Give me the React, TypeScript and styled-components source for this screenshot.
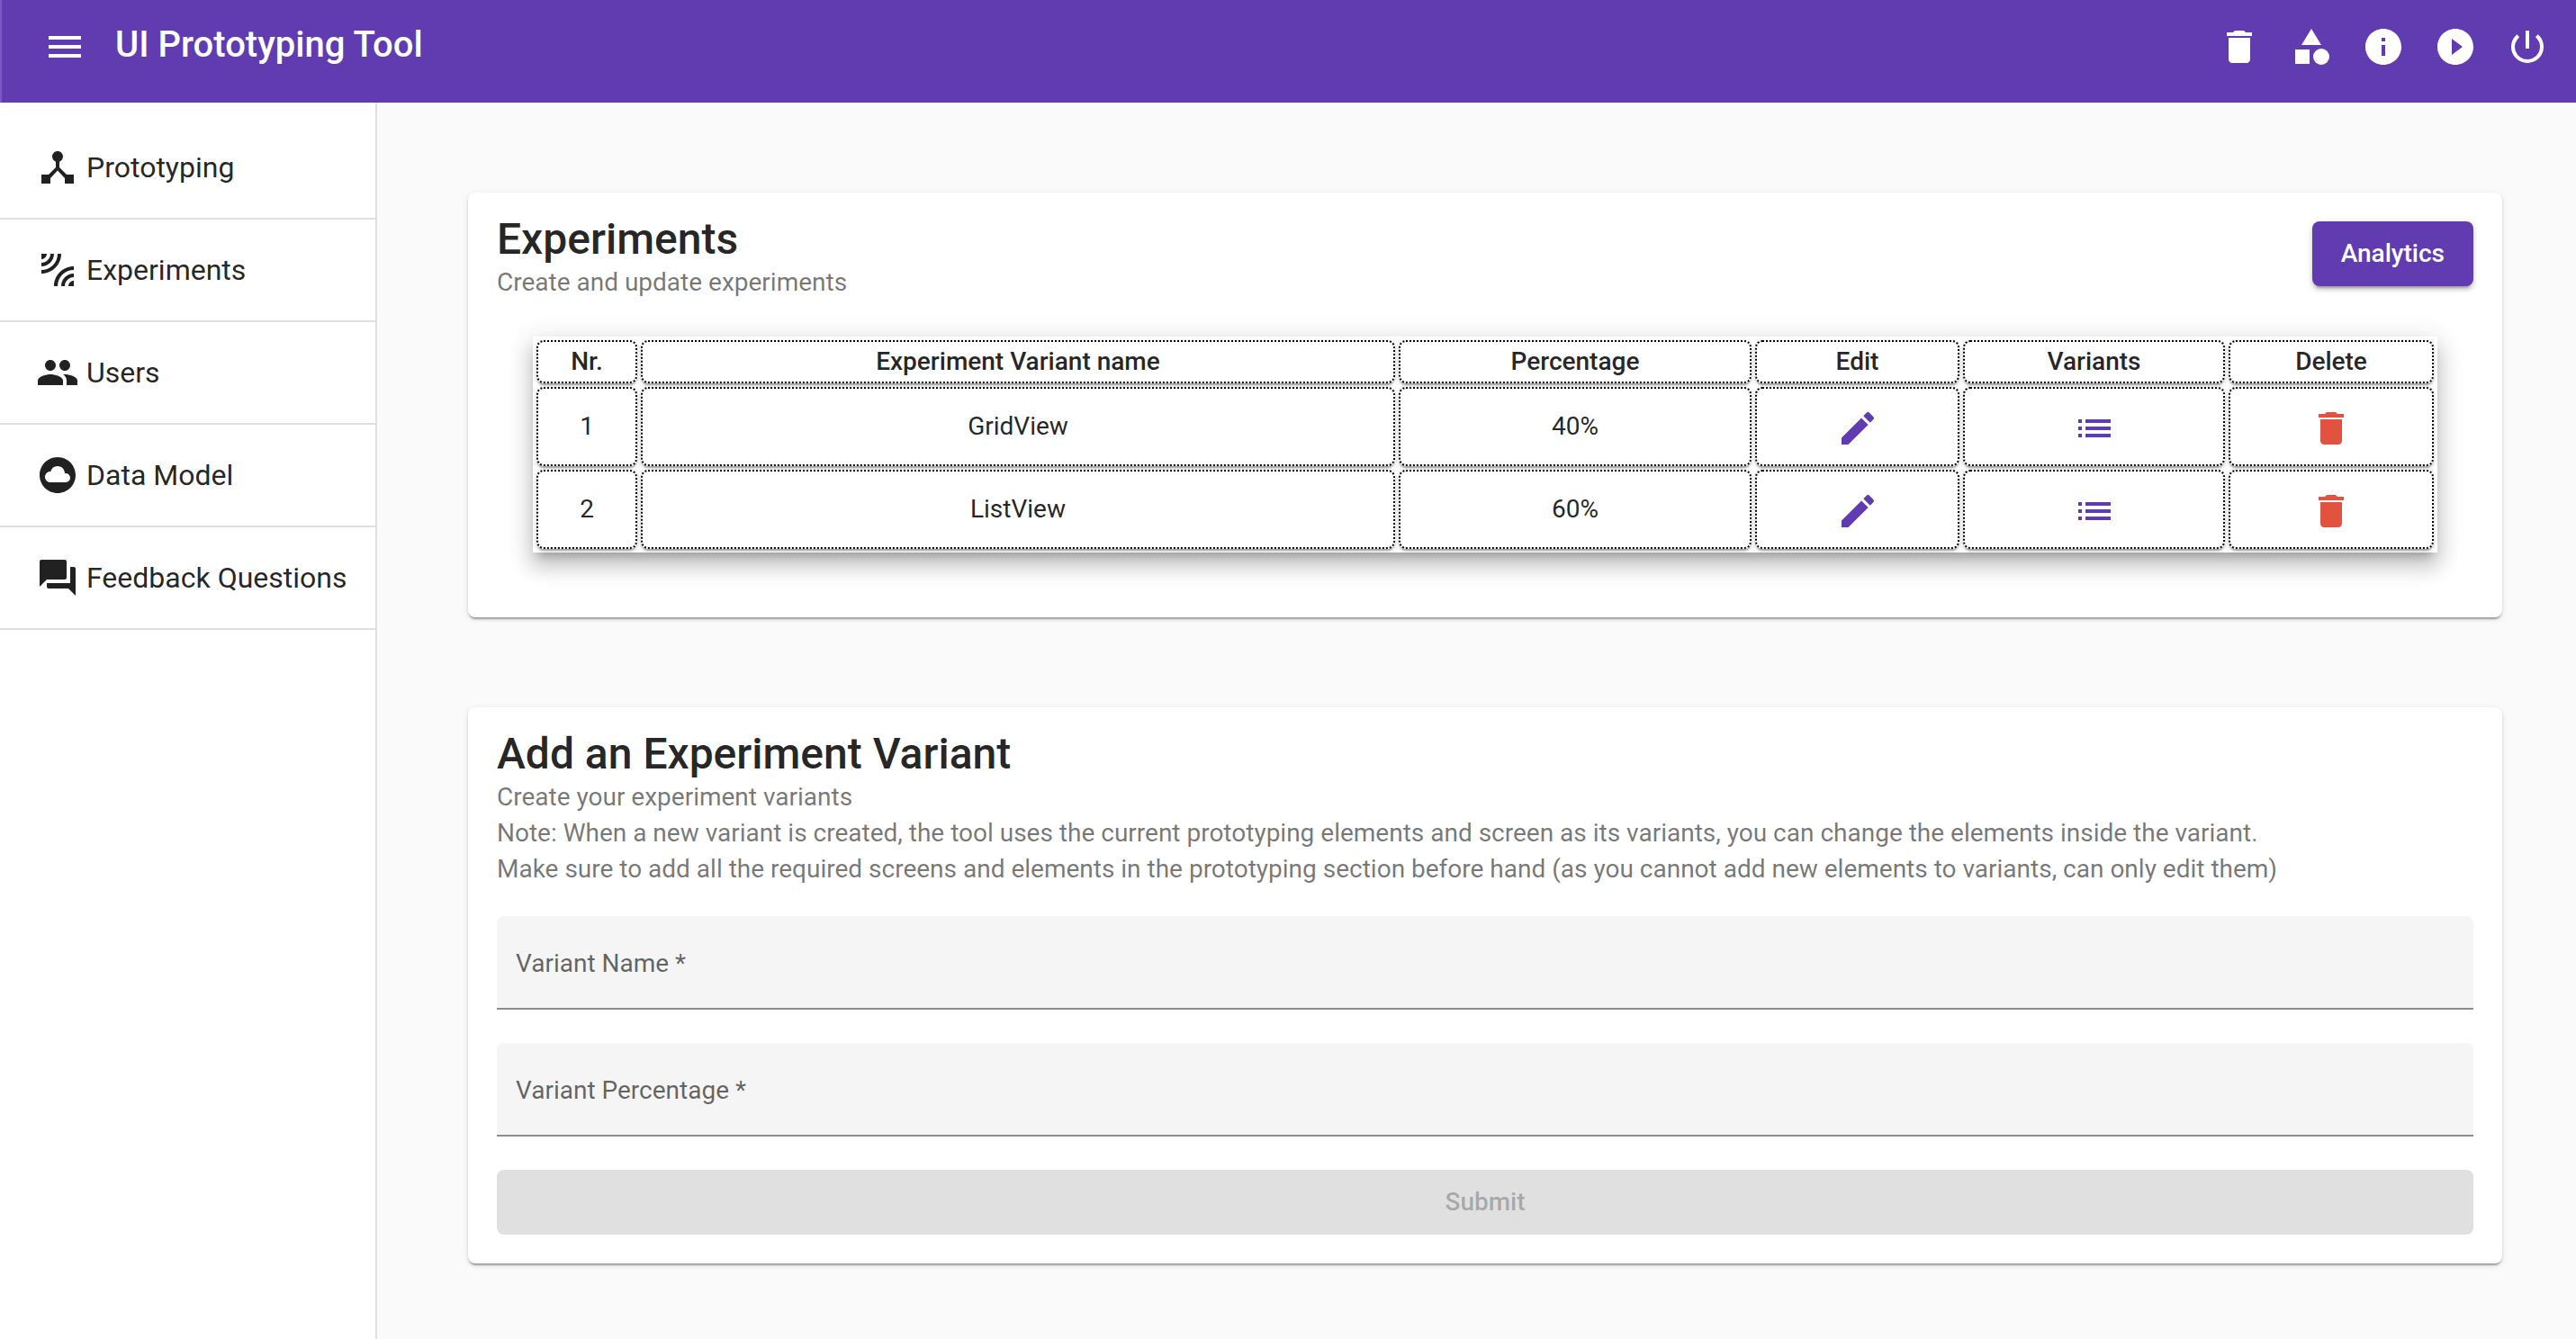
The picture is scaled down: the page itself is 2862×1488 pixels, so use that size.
import React, { useState } from "react";
import styled, { createGlobalStyle } from "styled-components";
import {
  MdMenu, MdDelete, MdCategory, MdInfo, MdPlayCircleFilled, MdPowerSettingsNew,
  MdDeviceHub, MdLeakAdd, MdPeople, MdCloudCircle, MdQuestionAnswer, MdEdit, MdList,
} from "react-icons/md";

const purple = "#613bb0";
const red = "#e2533f";
const ink = "rgba(0, 0, 0, 0.87)";

const GlobalStyle = createGlobalStyle`
  *, *::before, *::after { box-sizing: border-box; }
  body {
    margin: 0;
    background: #fafafa;
    color: ${ink};
    font-family: Roboto, "Liberation Sans", sans-serif;
    font-size: 28px;
    line-height: 40px;
  }
  button, input { font: inherit; }
`;

const Page = styled.div`
  display: flex;
  flex-direction: column;
  min-height: 100vh;
`;

const Toolbar = styled.header`
  display: flex;
  align-items: flex-start;
  height: 114px;
  padding: 28px 30px 0 46px;
  border-left: 2px solid #7b5abd;
  background: ${purple};
  color: #fff;
`;

const AppTitle = styled.h1`
  flex: 1;
  margin: 0 0 0 32px;
  font-size: 40px;
  font-weight: 500;
  line-height: 44px;
`;

const IconButton = styled.button<{ $color?: string }>`
  display: inline-flex;
  padding: 0;
  border: 0;
  background: none;
  color: ${(p) => p.$color ?? "inherit"};
  font-size: 48px;
  cursor: pointer;
`;

const Actions = styled.div`
  display: flex;
  gap: 32px;
`;

const Body = styled.div`
  display: flex;
  flex: 1;
`;

const Sidebar = styled.nav`
  flex: none;
  width: 419px;
  padding-top: 16px;
  border-right: 2px solid #e0e0e0;
  background: #fff;
`;

const NavLink = styled.a`
  display: flex;
  align-items: center;
  gap: 8px;
  height: 114px;
  padding-left: 40px;
  border-bottom: 2px solid #e0e0e0;
  color: inherit;
  font-size: 32px;
  text-decoration: none;

  svg { flex: none; font-size: 48px; }
`;

const Main = styled.main`
  display: flex;
  flex: 1;
  flex-direction: column;
  gap: 100px;
  min-width: 0;
  padding: 100px 82px 84px 101px;
`;

const Card = styled.section`
  padding: 32px;
  border-radius: 8px;
  background: #fff;
  box-shadow: 0 4px 2px -2px rgba(0, 0, 0, 0.2), 0 2px 2px 0 rgba(0, 0, 0, 0.14),
    0 2px 6px 0 rgba(0, 0, 0, 0.12);
`;

const CardHeader = styled.div`
  display: flex;
  align-items: flex-start;
  justify-content: space-between;
`;

const CardTitle = styled.h2`
  margin: 0 0 8px;
  font-size: 48px;
  font-weight: 500;
  line-height: 40px;
`;

const CardSubtitle = styled.p`
  margin: 0;
  color: rgba(0, 0, 0, 0.54);
`;

const Button = styled.button`
  height: 72px;
  padding: 0 32px;
  border: 0;
  border-radius: 8px;
  background: ${purple};
  color: #fff;
  font-weight: 500;
  box-shadow: 0 6px 2px -4px rgba(0, 0, 0, 0.2), 0 4px 4px 0 rgba(0, 0, 0, 0.14),
    0 2px 10px 0 rgba(0, 0, 0, 0.12);
  cursor: pointer;

  &:disabled {
    background: #e0e0e0;
    color: rgba(0, 0, 0, 0.26);
    box-shadow: none;
    cursor: default;
  }
`;

const TableWrap = styled.div`
  margin: 40px;
`;

const Table = styled.table`
  width: 100%;
  table-layout: fixed;
  border-spacing: 4px;
  text-align: center;
  box-shadow: 0 10px 10px -6px rgba(0, 0, 0, 0.2), 0 16px 20px 2px rgba(0, 0, 0, 0.14),
    0 6px 28px 4px rgba(0, 0, 0, 0.12);

  th, td {
    padding: 2px;
    border: 2px dotted #000;
    border-radius: 8px;
    box-shadow: 0 4px 2px -2px rgba(0, 0, 0, 0.2), 0 2px 2px 0 rgba(0, 0, 0, 0.14),
      0 2px 6px 0 rgba(0, 0, 0, 0.12);
  }
  th { height: 48px; font-weight: 500; }
  td { height: 88px; }
`;

const ActionCell = styled.td`
  && { padding-top: 6px; }
  button { vertical-align: middle; }
`;

const Form = styled.form`
  display: flex;
  flex-direction: column;
  gap: 37px;
  margin-top: 32px;
`;

const Field = styled.div`
  position: relative;
`;

const FieldLabel = styled.label`
  position: absolute;
  top: 33px;
  left: 21px;
  color: rgba(0, 0, 0, 0.6);
  pointer-events: none;
`;

const FieldInput = styled.input`
  display: block;
  width: 100%;
  height: 104px;
  padding: 36px 21px 8px;
  border: 0;
  border-bottom: 2px solid #8c8c8c;
  border-radius: 8px 8px 0 0;
  background: #f5f5f5;
  color: inherit;
  outline: 0;

  &:focus + label, &:not(:placeholder-shown) + label {
    top: 4px;
    font-size: 20px;
  }
`;

const links = [
  { label: "Prototyping", Icon: MdDeviceHub },
  { label: "Experiments", Icon: MdLeakAdd },
  { label: "Users", Icon: MdPeople },
  { label: "Data Model", Icon: MdCloudCircle },
  { label: "Feedback Questions", Icon: MdQuestionAnswer },
];

const actions = [
  { label: "Delete", Icon: MdDelete },
  { label: "Elements", Icon: MdCategory },
  { label: "Info", Icon: MdInfo },
  { label: "Play", Icon: MdPlayCircleFilled },
  { label: "Log out", Icon: MdPowerSettingsNew },
];

const variants = [
  { name: "GridView", percentage: 40 },
  { name: "ListView", percentage: 60 },
];

export default function App() {
  const [name, setName] = useState("");
  const [percentage, setPercentage] = useState("");

  return (
    <Page>
      <GlobalStyle />
      <Toolbar>
        <IconButton aria-label="Menu"><MdMenu /></IconButton>
        <AppTitle>UI Prototyping Tool</AppTitle>
        <Actions>
          {actions.map(({ label, Icon }) => (
            <IconButton key={label} aria-label={label}><Icon /></IconButton>
          ))}
        </Actions>
      </Toolbar>
      <Body>
        <Sidebar>
          {links.map(({ label, Icon }) => (
            <NavLink key={label} href="#"><Icon />{label}</NavLink>
          ))}
        </Sidebar>
        <Main>
          <Card>
            <CardHeader>
              <div>
                <CardTitle>Experiments</CardTitle>
                <CardSubtitle>Create and update experiments</CardSubtitle>
              </div>
              <Button type="button">Analytics</Button>
            </CardHeader>
            <TableWrap>
              <Table>
                <colgroup>
                  <col width={112} />
                  <col />
                  <col width={392} />
                  <col width={227} />
                  <col width={291} />
                  <col width={228} />
                </colgroup>
                <thead>
                  <tr>
                    <th>Nr.</th>
                    <th>Experiment Variant name</th>
                    <th>Percentage</th>
                    <th>Edit</th>
                    <th>Variants</th>
                    <th>Delete</th>
                  </tr>
                </thead>
                <tbody>
                  {variants.map((v, i) => (
                    <tr key={v.name}>
                      <td>{i + 1}</td>
                      <td>{v.name}</td>
                      <td>{v.percentage}%</td>
                      <ActionCell><IconButton $color={purple} aria-label="Edit"><MdEdit /></IconButton></ActionCell>
                      <ActionCell><IconButton $color={purple} aria-label="Variants"><MdList /></IconButton></ActionCell>
                      <ActionCell><IconButton $color={red} aria-label="Delete"><MdDelete /></IconButton></ActionCell>
                    </tr>
                  ))}
                </tbody>
              </Table>
            </TableWrap>
          </Card>
          <Card>
            <CardTitle>Add an Experiment Variant</CardTitle>
            <CardSubtitle>
              Create your experiment variants
              <br />
              Note: When a new variant is created, the tool uses the current prototyping elements and screen as its variants, you can change the elements inside the variant.
              <br />
              Make sure to add all the required screens and elements in the prototyping section before hand (as you cannot add new elements to variants, can only edit them)
            </CardSubtitle>
            <Form onSubmit={(e) => e.preventDefault()}>
              <Field>
                <FieldInput id="variant-name" placeholder=" " value={name} onChange={(e) => setName(e.target.value)} />
                <FieldLabel htmlFor="variant-name">Variant Name *</FieldLabel>
              </Field>
              <Field>
                <FieldInput id="variant-percentage" placeholder=" " value={percentage} onChange={(e) => setPercentage(e.target.value)} />
                <FieldLabel htmlFor="variant-percentage">Variant Percentage *</FieldLabel>
              </Field>
              <Button type="submit" disabled={!name || !percentage}>Submit</Button>
            </Form>
          </Card>
        </Main>
      </Body>
    </Page>
  );
}
